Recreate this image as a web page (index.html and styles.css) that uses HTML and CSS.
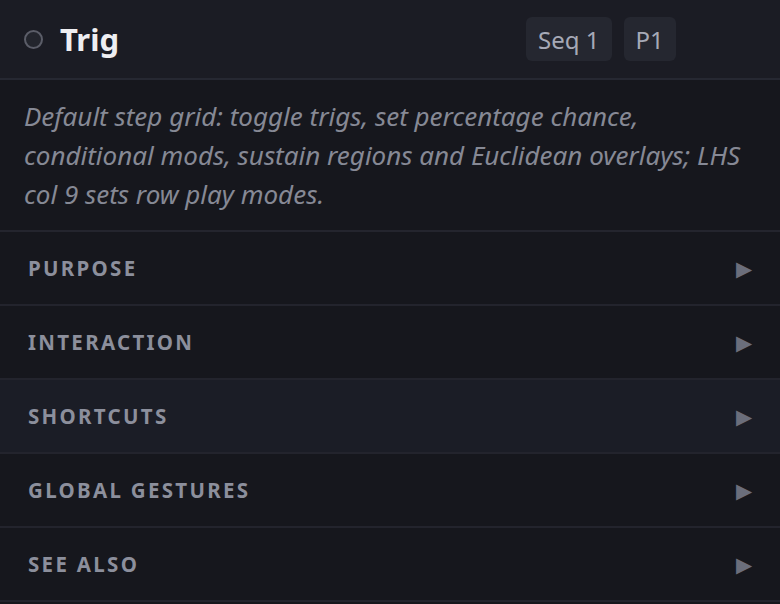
FILE: index.html
```html
<!DOCTYPE html>
<html>
<head>
<meta charset="utf-8">
<link rel="stylesheet" href="styles.css">
</head>
<body>
<div class="panel">
  <header class="head">
    <span class="dot"></span>
    <h1 class="title">Trig</h1>
    <div class="badges">
      <span class="badge">Seq 1</span>
      <span class="badge">P1</span>
    </div>
  </header>
  <p class="desc">Default step grid: toggle trigs, set percentage chance, conditional mods, sustain regions and Euclidean overlays; LHS col 9 sets row play modes.</p>
  <div class="row"><span class="label">Purpose</span><span class="arrow">▶</span></div>
  <div class="row"><span class="label">Interaction</span><span class="arrow">▶</span></div>
  <div class="row row-hover"><span class="label">Shortcuts</span><span class="arrow">▶</span></div>
  <div class="row"><span class="label">Global Gestures</span><span class="arrow">▶</span></div>
  <div class="row"><span class="label">See Also</span><span class="arrow">▶</span></div>
</div>
</body>
</html>
```
FILE: styles.css
```css
html, body {
  margin: 0;
  padding: 0;
  background: #16171d;
  font-family: "Noto Sans", "Open Sans", sans-serif;
}
.panel {
  width: 780px;
  height: 604px;
  overflow: hidden;
}
.head {
  height: 78px;
  display: flex;
  align-items: center;
  padding-left: 24px;
  background: #1b1c24;
  border-bottom: 2px solid #262832;
}
.dot {
  width: 15px;
  height: 15px;
  border-radius: 50%;
  border: 2px solid #5b5d68;
  background: #23252d;
  flex: none;
}
.title {
  margin: 0 0 0 17px;
  font-size: 31px;
  font-weight: 700;
  color: #eeeef2;
  line-height: 1;
}
.badges {
  display: flex;
  gap: 12px;
  margin-left: 407px;
}
.badge {
  height: 44px;
  padding: 0 12px;
  display: flex;
  align-items: center;
  background: #252730;
  border-radius: 6px;
  color: #a6a9b6;
  font-size: 24px;
}
.desc {
  margin: 0;
  padding: 17px 24px 16px;
  font-style: italic;
  font-size: 26px;
  line-height: 39px;
  color: #868995;
  border-bottom: 2px solid #24252e;
}
.row {
  height: 72px;
  display: flex;
  align-items: center;
  justify-content: space-between;
  padding: 0 28px 0 28px;
  border-bottom: 2px solid #23242d;
}
.row-hover {
  background: #1b1d26;
}
.label {
  text-transform: uppercase;
  font-weight: 700;
  font-size: 20.5px;
  letter-spacing: 2.3px;
  color: #8c8f9c;
}
.arrow {
  color: #6b6e7b;
  font-size: 21px;
}
```
